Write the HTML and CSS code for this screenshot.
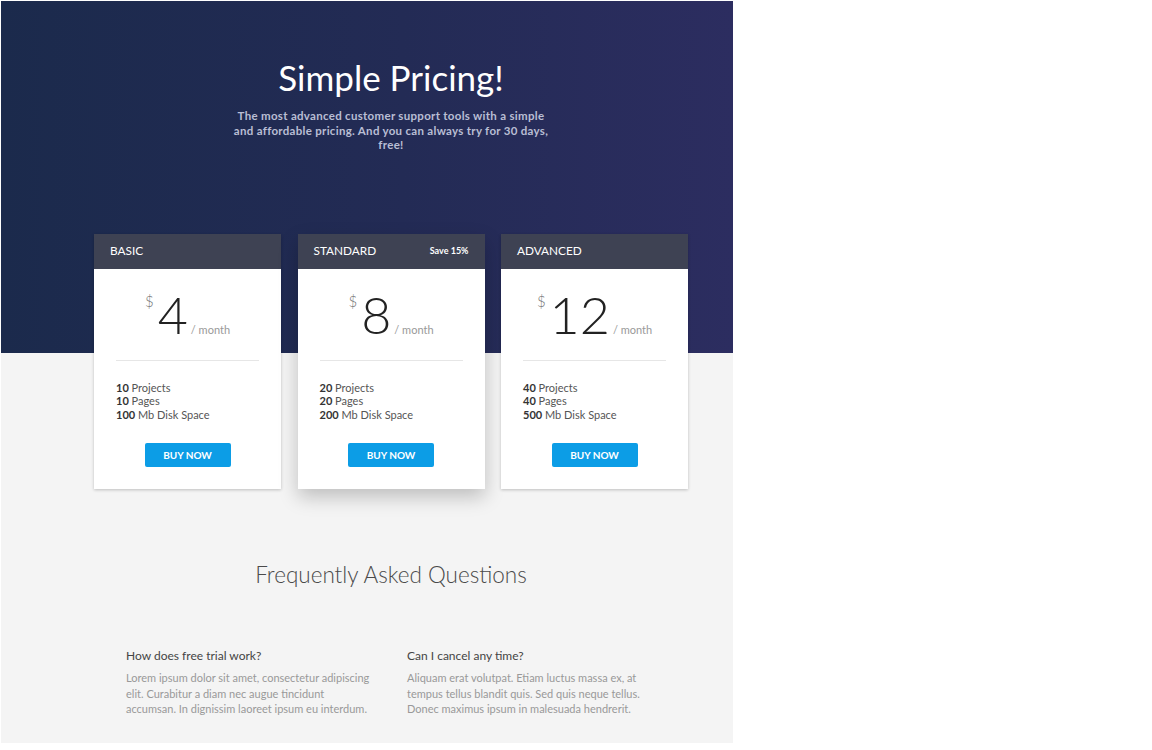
FILE: index.html
```html
<!DOCTYPE html>
<html>
<head>
<meta charset="utf-8">
<link rel="stylesheet" href="styles.css">
</head>
<body>
<div class="page">
  <header class="hero">
    <h1 class="hero-title">Simple Pricing!</h1>
    <p class="hero-sub">The most advanced customer support tools with a simple and affordable pricing. And you can always try for 30 days, free!</p>
  </header>
  <section class="plans">
    <div class="card">
      <div class="card-head"><span class="plan-name">BASIC</span></div>
      <div class="card-body">
        <div class="price"><span class="cur">$</span><span class="amount">4</span><span class="per">/ month</span></div>
        <hr class="divider">
        <ul class="features">
          <li><b>10</b> Projects</li>
          <li><b>10</b> Pages</li>
          <li><b>100</b> Mb Disk Space</li>
        </ul>
        <a class="buy" href="#">BUY NOW</a>
      </div>
    </div>
    <div class="card card-featured">
      <div class="card-head"><span class="plan-name">STANDARD</span><span class="save">Save 15%</span></div>
      <div class="card-body">
        <div class="price"><span class="cur">$</span><span class="amount">8</span><span class="per">/ month</span></div>
        <hr class="divider">
        <ul class="features">
          <li><b>20</b> Projects</li>
          <li><b>20</b> Pages</li>
          <li><b>200</b> Mb Disk Space</li>
        </ul>
        <a class="buy" href="#">BUY NOW</a>
      </div>
    </div>
    <div class="card">
      <div class="card-head"><span class="plan-name">ADVANCED</span></div>
      <div class="card-body">
        <div class="price"><span class="cur">$</span><span class="amount">12</span><span class="per">/ month</span></div>
        <hr class="divider">
        <ul class="features">
          <li><b>40</b> Projects</li>
          <li><b>40</b> Pages</li>
          <li><b>500</b> Mb Disk Space</li>
        </ul>
        <a class="buy" href="#">BUY NOW</a>
      </div>
    </div>
  </section>
  <section class="faq">
    <h2 class="faq-title">Frequently Asked Questions</h2>
    <div class="faq-grid">
      <div class="faq-item">
        <h3 class="faq-q">How does free trial work?</h3>
        <p class="faq-a">Lorem ipsum dolor sit amet, consectetur adipiscing elit. Curabitur a diam nec augue tincidunt accumsan. In dignissim laoreet ipsum eu interdum.</p>
      </div>
      <div class="faq-item">
        <h3 class="faq-q">Can I cancel any time?</h3>
        <p class="faq-a">Aliquam erat volutpat. Etiam luctus massa ex, at tempus tellus blandit quis. Sed quis neque tellus. Donec maximus ipsum in malesuada hendrerit.</p>
      </div>
    </div>
  </section>
</div>
</body>
</html>
```

FILE: styles.css
```css
* { box-sizing: border-box; }
html, body { margin: 0; padding: 0; background: #ffffff; }
body { font-family: Lato, "Open Sans", "Liberation Sans", sans-serif; }

.page {
  margin: 1px 0 0 1px;
  width: 732px;
  height: 742px;
  background: #f4f4f4;
  overflow: hidden;
}

.hero {
  height: 352px;
  padding-top: 55px;
  background: linear-gradient(90deg, #1b2a4c 0%, #232b55 55%, #2c2d60 100%);
  display: flex;
  flex-direction: column;
  align-items: center;
  padding-left: 48px;
}
.hero-title {
  margin: 0;
  font-size: 35px;
  line-height: 42px;
  font-weight: 400;
  color: #ffffff;
}
.hero-sub {
  margin: 11px 0 0;
  width: 322px;
  font-size: 11.5px;
  line-height: 14.5px;
  letter-spacing: 0.3px;
  font-weight: 700;
  color: #b9bed4;
  text-align: center;
}

.plans {
  margin: -119px 0 0 93px;
  display: flex;
  gap: 16.5px;
}
.card {
  width: 187px;
  background: #ffffff;
  box-shadow: 0 1px 3px rgba(0,0,0,0.22);
}
.card-featured {
  box-shadow: 0 8px 18px rgba(0,0,0,0.22);
}
.card-head {
  height: 35px;
  padding: 0 16px 2px;
  background: #3e4253;
  display: flex;
  align-items: center;
  justify-content: space-between;
  color: #ffffff;
}
.plan-name { font-size: 11.8px; }
.save { font-size: 9px; font-weight: 700; }

.card-body {
  padding: 14px 22px 22px;
  display: flex;
  flex-direction: column;
}
.price {
  display: flex;
  justify-content: center;
  align-items: baseline;
  height: 62px;
  color: #222;
}
.cur {
  align-self: flex-start;
  margin-top: 9px;
  margin-right: 4px;
  font-size: 15px;
  color: #777;
  font-weight: 300;
}
.amount {
  font-size: 52px;
  line-height: 62px;
  font-weight: 300;
}
.per {
  margin-left: 3px;
  font-size: 11px;
  color: #999;
}
.divider {
  margin: 15px 0 0;
  border: 0;
  border-top: 1px solid #e6e6e6;
}
.features {
  list-style: none;
  margin: 20px 0 0;
  padding: 0;
  font-size: 11px;
  line-height: 13.3px;
  color: #555;
}
.features b { color: #333; font-weight: 700; }
.buy {
  align-self: center;
  margin-top: 22px;
  width: 86px;
  height: 24px;
  border-radius: 2px;
  background: #0c9de6;
  color: #ffffff;
  font-size: 10px;
  font-weight: 700;
  text-decoration: none;
  display: flex;
  align-items: center;
  justify-content: center;
}

.faq {
  padding-top: 72px;
}
.faq-title {
  margin: 0;
  padding-left: 48px;
  text-align: center;
  font-size: 22.5px;
  line-height: 28px;
  font-weight: 300;
  color: #4a4a4a;
}
.faq-grid {
  margin: 59px 0 0 125px;
  display: grid;
  grid-template-columns: 250px 250px;
  column-gap: 31px;
}
.faq-q {
  margin: 0;
  font-size: 12px;
  line-height: 16px;
  font-weight: 400;
  color: #444;
}
.faq-a {
  margin: 6px 0 0;
  font-size: 11px;
  line-height: 15.7px;
  color: #999;
}
```
